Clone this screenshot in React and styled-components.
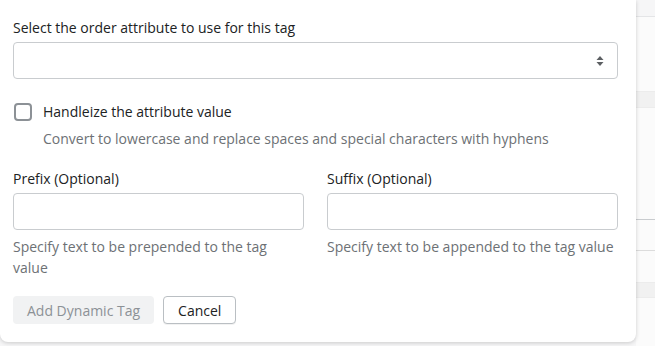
import React from 'react'
import styled, { createGlobalStyle } from 'styled-components'

const GlobalStyle = createGlobalStyle`
  html, body {
    margin: 0;
    padding: 0;
    background: #f6f6f7;
  }
  body {
    font-family: "Open Sans", "Noto Sans", sans-serif;
    color: #202223;
  }
`

const Page = styled.div`
  position: relative;
  width: 655px;
  height: 346px;
  overflow: hidden;
  background: #f6f6f7;
`

const Backdrop = styled.div`
  display: flex;
  flex-direction: column;
  padding-left: 636px;
  padding-top: 16px;
`

const BackRow = styled.div`
  height: ${p => p.h}px;
  background: ${p => p.bg || '#fafafa'};
  border-top: 1px solid ${p => p.line || '#e4e5e7'};
`

const Card = styled.div`
  position: absolute;
  top: 0;
  left: 0;
  width: 636px;
  height: 342px;
  box-sizing: border-box;
  padding: 18px 18px 0 13px;
  background: #fff;
  border-radius: 0 0 8px 8px;
  box-shadow: 0 1px 4px rgba(0, 0, 0, 0.18);
  display: flex;
  flex-direction: column;
`

const Label = styled.div`
  font-size: 14px;
  line-height: 20px;
  margin-bottom: 4px;
`

const SelectBox = styled.div`
  height: 37px;
  box-sizing: border-box;
  border: 1px solid #c9cccf;
  border-radius: 4px;
  display: flex;
  align-items: center;
  justify-content: flex-end;
  padding-right: 13px;
`

const CheckRow = styled.div`
  display: flex;
  align-items: center;
  gap: 11px;
  margin-top: 23px;
  margin-left: 1px;
  font-size: 14px;
  line-height: 20px;
`

const Checkbox = styled.span`
  width: 18px;
  height: 18px;
  box-sizing: border-box;
  border: 2px solid #8c9196;
  border-radius: 4px;
`

const Help = styled.div`
  font-size: 14px;
  line-height: 21px;
  color: #6d7175;
  margin-left: ${p => p.indent || 0}px;
  margin-top: ${p => p.top || 0}px;
`

const FieldGrid = styled.div`
  display: grid;
  grid-template-columns: 1fr 1fr;
  column-gap: 23px;
  margin-top: 20px;
`

const Field = styled.div`
  display: flex;
  flex-direction: column;
`

const TextInput = styled.div`
  height: 37px;
  box-sizing: border-box;
  border: 1px solid #c9cccf;
  border-radius: 4px;
  margin-bottom: 6px;
`

const Actions = styled.div`
  display: flex;
  gap: 9px;
  margin-top: 18px;
`

const Button = styled.button`
  height: 28px;
  box-sizing: border-box;
  padding: 0 14px;
  font-family: inherit;
  font-size: 14px;
  border-radius: 4px;
  border: ${p => (p.disabled ? '0' : '1px solid #babfc3')};
  background: ${p => (p.disabled ? '#f1f2f3' : '#fff')};
  color: ${p => (p.disabled ? '#8c9196' : '#202223')};
  box-shadow: ${p => (p.disabled ? 'none' : '0 1px 0 rgba(0,0,0,0.05)')};
`

const Arrows = () => (
  <svg width="8" height="12" viewBox="0 0 8 12">
    <path d="M4 1 L7.5 5 H0.5 Z" fill="#5c5f62" />
    <path d="M4 11 L7.5 7 H0.5 Z" fill="#5c5f62" />
  </svg>
)

export default function App() {
  return (
    <Page>
      <GlobalStyle />
      <Backdrop>
        <BackRow h={74} bg="#fbfbfb" />
        <BackRow h={15} bg="#f1f1f1" line="#ececec" />
        <BackRow h={111} bg="#fbfbfb" line="#ececec" />
        <BackRow h={30} bg="#fbfbfb" line="#c9cccf" />
        <BackRow h={31} bg="#fbfbfb" line="#dcdcdc" />
        <BackRow h={14} bg="#f1f1f1" line="#ececec" />
        <BackRow h={60} bg="#fbfbfb" line="#ececec" />
      </Backdrop>
      <Card>
        <Label>Select the order attribute to use for this tag</Label>
        <SelectBox>
          <Arrows />
        </SelectBox>
        <CheckRow>
          <Checkbox />
          Handleize the attribute value
        </CheckRow>
        <Help indent={30} top={6}>
          Convert to lowercase and replace spaces and special characters with hyphens
        </Help>
        <FieldGrid>
          <Field>
            <Label>Prefix (Optional)</Label>
            <TextInput />
            <Help>Specify text to be prepended to the tag value</Help>
          </Field>
          <Field>
            <Label>Suffix (Optional)</Label>
            <TextInput />
            <Help>Specify text to be appended to the tag value</Help>
          </Field>
        </FieldGrid>
        <Actions>
          <Button disabled>Add Dynamic Tag</Button>
          <Button>Cancel</Button>
        </Actions>
      </Card>
    </Page>
  )
}
